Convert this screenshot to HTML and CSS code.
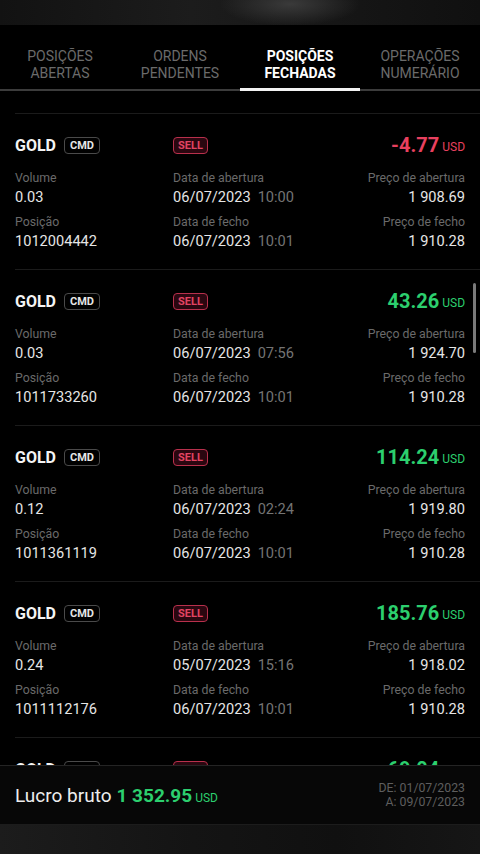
FILE: index.html
```html
<!DOCTYPE html>
<html lang="pt">

<head>
  <meta charset="utf-8">
  <link rel="stylesheet" href="styles.css">
</head>

<body>
  <div class="status-bar"></div>

  <div class="tabs">
    <div class="tab">Posições<br>abertas</div>
    <div class="tab">Ordens<br>pendentes</div>
    <div class="tab active">Posições<br>fechadas</div>
    <div class="tab">Operações<br>numerário</div>
  </div>

  <div class="list">
    <div class="trade">
      <div class="col">
        <div class="head"><span class="symbol">GOLD</span><span class="tag">CMD</span></div>
        <div class="label">Volume</div>
        <div class="value">0.03</div>
        <div class="label">Posição</div>
        <div class="value">1012004442</div>
      </div>
      <div class="col">
        <div class="head"><span class="sell">SELL</span></div>
        <div class="label">Data de abertura</div>
        <div class="value">06/07/2023<span class="time">10:00</span></div>
        <div class="label">Data de fecho</div>
        <div class="value">06/07/2023<span class="time">10:01</span></div>
      </div>
      <div class="col right">
        <div class="head"><span class="amount loss">-4.77</span><span class="cur loss">USD</span></div>
        <div class="label">Preço de abertura</div>
        <div class="value">1 908.69</div>
        <div class="label">Preço de fecho</div>
        <div class="value">1 910.28</div>
      </div>
    </div>

    <div class="trade">
      <div class="col">
        <div class="head"><span class="symbol">GOLD</span><span class="tag">CMD</span></div>
        <div class="label">Volume</div>
        <div class="value">0.03</div>
        <div class="label">Posição</div>
        <div class="value">1011733260</div>
      </div>
      <div class="col">
        <div class="head"><span class="sell">SELL</span></div>
        <div class="label">Data de abertura</div>
        <div class="value">06/07/2023<span class="time">07:56</span></div>
        <div class="label">Data de fecho</div>
        <div class="value">06/07/2023<span class="time">10:01</span></div>
      </div>
      <div class="col right">
        <div class="head"><span class="amount gain">43.26</span><span class="cur gain">USD</span></div>
        <div class="label">Preço de abertura</div>
        <div class="value">1 924.70</div>
        <div class="label">Preço de fecho</div>
        <div class="value">1 910.28</div>
      </div>
    </div>

    <div class="trade">
      <div class="col">
        <div class="head"><span class="symbol">GOLD</span><span class="tag">CMD</span></div>
        <div class="label">Volume</div>
        <div class="value">0.12</div>
        <div class="label">Posição</div>
        <div class="value">1011361119</div>
      </div>
      <div class="col">
        <div class="head"><span class="sell">SELL</span></div>
        <div class="label">Data de abertura</div>
        <div class="value">06/07/2023<span class="time">02:24</span></div>
        <div class="label">Data de fecho</div>
        <div class="value">06/07/2023<span class="time">10:01</span></div>
      </div>
      <div class="col right">
        <div class="head"><span class="amount gain">114.24</span><span class="cur gain">USD</span></div>
        <div class="label">Preço de abertura</div>
        <div class="value">1 919.80</div>
        <div class="label">Preço de fecho</div>
        <div class="value">1 910.28</div>
      </div>
    </div>

    <div class="trade">
      <div class="col">
        <div class="head"><span class="symbol">GOLD</span><span class="tag">CMD</span></div>
        <div class="label">Volume</div>
        <div class="value">0.24</div>
        <div class="label">Posição</div>
        <div class="value">1011112176</div>
      </div>
      <div class="col">
        <div class="head"><span class="sell">SELL</span></div>
        <div class="label">Data de abertura</div>
        <div class="value">05/07/2023<span class="time">15:16</span></div>
        <div class="label">Data de fecho</div>
        <div class="value">06/07/2023<span class="time">10:01</span></div>
      </div>
      <div class="col right">
        <div class="head"><span class="amount gain">185.76</span><span class="cur gain">USD</span></div>
        <div class="label">Preço de abertura</div>
        <div class="value">1 918.02</div>
        <div class="label">Preço de fecho</div>
        <div class="value">1 910.28</div>
      </div>
    </div>

    <div class="trade">
      <div class="col">
        <div class="head"><span class="symbol">GOLD</span><span class="tag">CMD</span></div>
      </div>
      <div class="col">
        <div class="head"><span class="sell">SELL</span></div>
      </div>
      <div class="col right">
        <div class="head"><span class="amount gain">69.04</span><span class="cur gain">USD</span></div>
      </div>
    </div>

    <div class="scrollbar"></div>
  </div>

  <div class="summary">
    <div class="total">
      Lucro bruto <span class="total-value">1 352.95</span><span class="cur gain">USD</span>
    </div>
    <div class="period">
      DE: 01/07/2023<br>
      A: 09/07/2023
    </div>
  </div>

  <div class="nav-bar"></div>
</body>

</html>
```

FILE: styles.css
```css
body {
  margin: 0;
  background-color: #000;
  font-family: Roboto, 'Noto Sans', sans-serif;
  color: #e8e8e8;
  height: 854px;
  overflow: hidden;
}

.status-bar {
  height: 25px;
  background:
    radial-gradient(ellipse 70px 22px at 290px 4px, #3a3a3a, transparent),
    linear-gradient(90deg, #121212, #1c1c1c 40%, #161616 70%, #101010);
}

/* tab strip */
.tabs {
  display: flex;
  height: 64px;
  border-bottom: 2px solid #3c3c3c;
}

.tab {
  flex: 1;
  display: flex;
  align-items: center;
  justify-content: center;
  padding-top: 16px;
  text-align: center;
  text-transform: uppercase;
  font-size: 14px;
  line-height: 17px;
  color: #6b6b6b;
  margin-bottom: -2px;
  border-bottom: 3px solid transparent;
}

.tab.active {
  color: #fff;
  font-weight: 700;
  border-bottom-color: #f2f2f2;
}

/* closed positions */
.list {
  position: relative;
  height: 674px;
  overflow: hidden;
  padding-top: 22px;
  box-sizing: border-box;
}

.trade {
  display: grid;
  grid-template-columns: 158px 1fr auto;
  height: 156px;
  box-sizing: border-box;
  margin-left: 15px;
  padding: 19px 15px 0 0;
  border-top: 1px solid #1b1b1b;
}

.col {
  display: flex;
  flex-direction: column;
}

.col.right {
  align-items: flex-end;
}

.head {
  display: flex;
  align-items: center;
  height: 24px;
  margin-bottom: 12px;
}

.symbol {
  font-size: 16px;
  font-weight: 700;
  color: #f4f4f4;
}

.tag {
  margin-left: 8px;
  padding: 0 5px;
  height: 15px;
  line-height: 15px;
  border: 1px solid #4a4a4a;
  border-radius: 4px;
  font-size: 11px;
  font-weight: 700;
  color: #e6e6e6;
}

.sell {
  padding: 0 4px;
  height: 15px;
  line-height: 15px;
  border: 1px solid #b8304c;
  border-radius: 4px;
  background-color: #2a0710;
  font-size: 11px;
  font-weight: 700;
  color: #e24463;
}

.amount {
  font-size: 20px;
  font-weight: 700;
}

.cur {
  margin-left: 3px;
  font-size: 12px;
  align-self: flex-end;
  margin-bottom: 3px;
}

.loss {
  color: #e8405f;
}

.gain {
  color: #2ccf6e;
}

.label {
  font-size: 12.3px;
  line-height: 18px;
  color: #6a6a6a;
}

.value {
  font-size: 14.6px;
  line-height: 20px;
  color: #e6e6e6;
  margin-bottom: 6px;
}

.time {
  margin-left: 7px;
  color: #747474;
}

.scrollbar {
  position: absolute;
  right: 4px;
  top: 192px;
  width: 3px;
  height: 70px;
  border-radius: 2px;
  background-color: #7a7a7a;
}

/* footer total */
.summary {
  display: flex;
  align-items: center;
  justify-content: space-between;
  height: 58px;
  padding: 0 15px;
  background-color: #070707;
  border-top: 1px solid #242424;
  border-bottom: 1px solid #1c1c1c;
}

.total {
  display: flex;
  align-items: baseline;
  font-size: 19px;
  color: #ededed;
}

.total-value {
  margin-left: 5px;
  font-size: 19px;
  font-weight: 700;
  color: #2ccf6e;
}

.total .cur {
  align-self: baseline;
  margin-bottom: 0;
}

.period {
  text-align: right;
  font-size: 12.3px;
  line-height: 14px;
  color: #5e5e5e;
}

.nav-bar {
  height: 29px;
  background: linear-gradient(90deg, #1c1c1c, #141414 40%, #101010 70%, #161616);
}
```
